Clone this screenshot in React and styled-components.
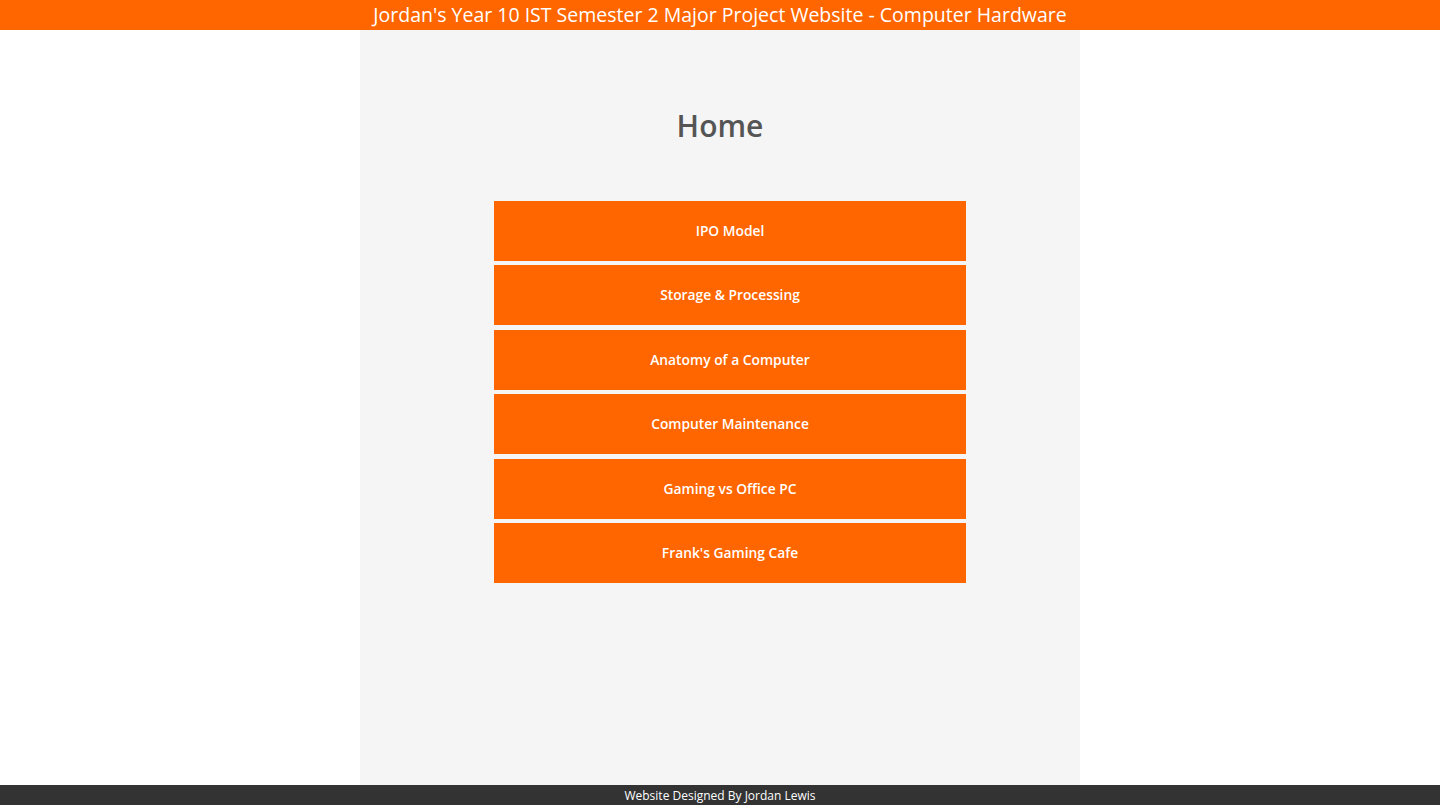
import React from "react";
import styled, { createGlobalStyle } from "styled-components";

const GlobalStyle = createGlobalStyle`
    html, body {
        margin: 0;
        padding: 0;
        background: #fff;
        font-family: 'Open Sans', 'Noto Sans', sans-serif;
    }
`;

const Page = styled.div`
    display: flex;
    flex-direction: column;
    min-height: 100vh;
`;

const TopBar = styled.header`
    height: 30px;
    background-color: #ff6600;
    color: #fff;
    font-size: 19.5px;
    line-height: 30px;
    text-align: center;
    white-space: nowrap;
`;

const Main = styled.main`
    flex: 1;
    display: flex;
    justify-content: center;
`;

// серый центральный блок
const Panel = styled.div`
    width: 720px;
    background-color: #f5f5f5;
    padding-top: 75px;
    box-sizing: border-box;
`;

const Title = styled.h1`
    margin: 0;
    text-align: center;
    color: #555;
    font-size: 30px;
    font-weight: 600;
`;

const Menu = styled.nav`
    display: flex;
    flex-direction: column;
    align-items: center;
    gap: 4.4px;
    margin-top: 55px;
    padding-left: 20px;
`;

const MenuButton = styled.a`
    display: block;
    width: 472px;
    height: 60px;
    line-height: 60px;
    background-color: #ff6600;
    color: #fff;
    font-size: 13.8px;
    font-weight: 600;
    text-align: center;
    text-decoration: none;
    cursor: pointer;
`;

const Footer = styled.footer`
    height: 20px;
    background-color: #333;
    color: #fff;
    font-size: 12px;
    line-height: 21px;
    text-align: center;
`;

const pages = [
    "IPO Model",
    "Storage & Processing",
    "Anatomy of a Computer",
    "Computer Maintenance",
    "Gaming vs Office PC",
    "Frank's Gaming Cafe",
];

const App = () => {
    return (
        <Page>
            <GlobalStyle />
            <TopBar>Jordan's Year 10 IST Semester 2 Major Project Website - Computer Hardware</TopBar>
            <Main>
                <Panel>
                    <Title>Home</Title>
                    <Menu>
                        {pages.map((name) => (
                            <MenuButton key={name}>{name}</MenuButton>
                        ))}
                    </Menu>
                </Panel>
            </Main>
            <Footer>Website Designed By Jordan Lewis</Footer>
        </Page>
    );
};

export default App;
